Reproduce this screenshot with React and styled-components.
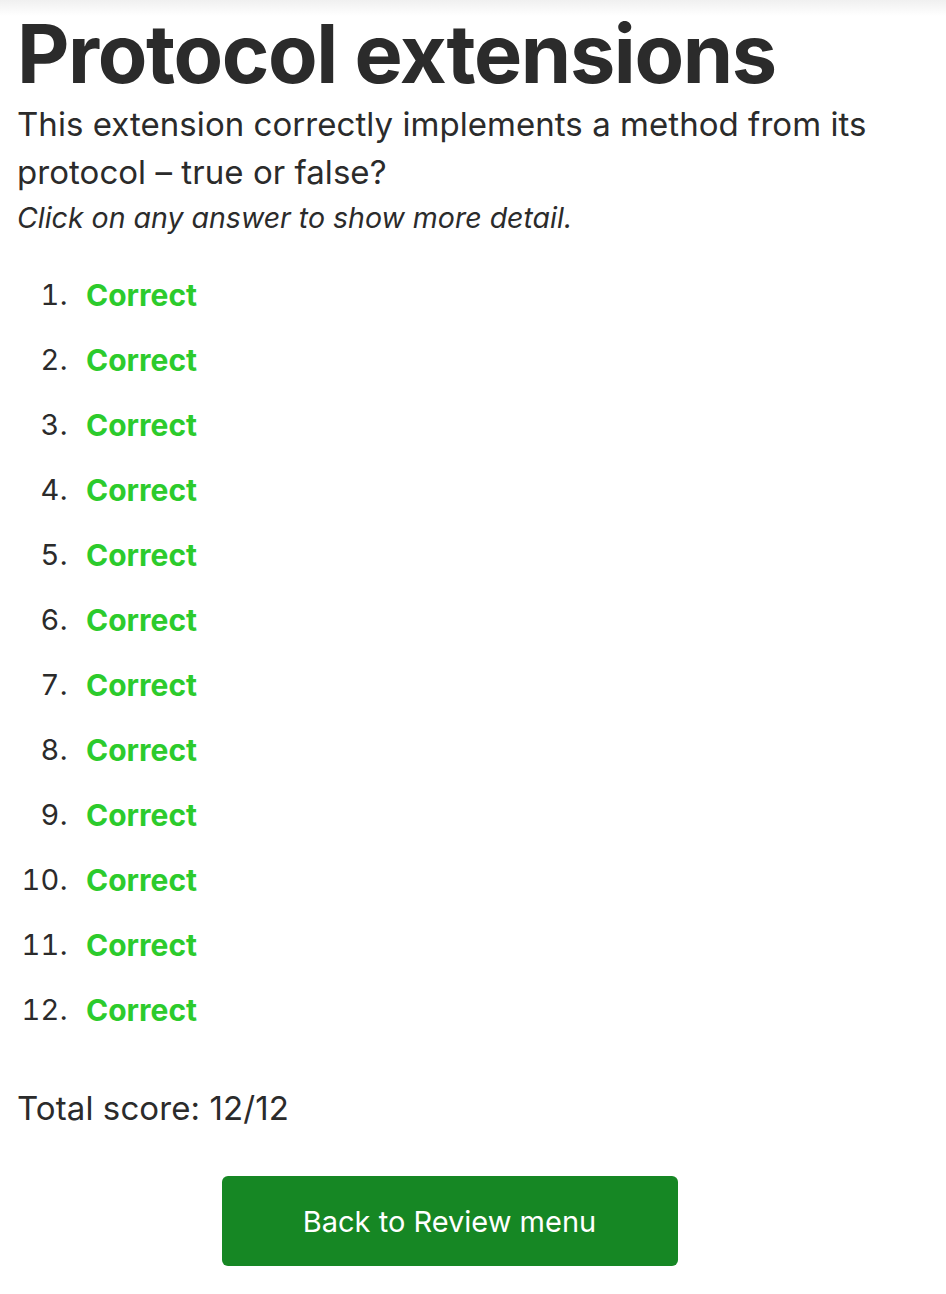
import React from 'react'
import styled, { createGlobalStyle } from 'styled-components';

const GlobalStyle = createGlobalStyle`
  html, body {
    margin: 0;
    padding: 0;
    background: #ffffff;
  }
  body {
    font-family: Inter, "Noto Sans", "Liberation Sans", sans-serif;
    color: #2b2b2b;
  }
`;

const Page = styled.div`
  min-height: 1294px;
  box-sizing: border-box;
  padding: 8px 18px 0 17px;
  background: linear-gradient(#f0f0f0 0px, #ffffff 16px);
`;

const Title = styled.h1`
  margin: 0;
  font-size: 81px;
  font-weight: 700;
  line-height: 92px;
  letter-spacing: -1.4px;
`;

const Question = styled.p`
  margin: 0;
  font-size: 33px;
  line-height: 48px;
  font-weight: 400;
  letter-spacing: 0.05px;
`;

const Hint = styled.p`
  margin: 0;
  font-size: 28.5px;
  line-height: 44px;
  font-style: italic;
`;

const AnswerList = styled.ol`
  list-style: none;
  margin: 22px 0 0 0;
  padding: 0;
  display: flex;
  flex-direction: column;
`;

const AnswerRow = styled.li`
  display: grid;
  grid-template-columns: 51px 1fr;
  column-gap: 18px;
  align-items: center;
  height: 65px;
  font-size: 29px;
`;

const Number = styled.span`
  text-align: right;
  color: #2b2b2b;
  letter-spacing: 0.4px;
  font-variant-numeric: tabular-nums;
`;

const Result = styled.span`
  font-weight: 700;
  font-size: 30px;
  color: ${props => props.correct ? '#2ccb2c' : '#d63a3a'};
`;

const Total = styled.p`
  margin: 46px 0 0 0;
  font-size: 33px;
  line-height: 40px;
  letter-spacing: 0.1px;
`;

const ButtonWrap = styled.div`
  display: flex;
  justify-content: center;
  margin-top: 48px;
  padding-right: 46px;
`;

const BackButton = styled.button`
  width: 456px;
  height: 90px;
  border: none;
  border-radius: 6px;
  background: #168724;
  color: #ffffff;
  font-family: inherit;
  font-size: 29px;
  font-weight: 400;
  cursor: pointer;
`;

const answers = Array.from({ length: 12 }, () => true);

function App() {
  return (
    <Page>
      <GlobalStyle />
      <Title>Protocol extensions</Title>
      <Question>This extension correctly implements a method from its protocol – true or false?</Question>
      <Hint>Click on any answer to show more detail.</Hint>
      <AnswerList>
        {answers.map((ok, i) => (
          <AnswerRow key={i}>
            <Number>{i + 1}.</Number>
            <Result correct={ok}>{ok ? 'Correct' : 'Wrong'}</Result>
          </AnswerRow>
        ))}
      </AnswerList>
      <Total>Total score: 12/12</Total>
      <ButtonWrap>
        <BackButton>Back to Review menu</BackButton>
      </ButtonWrap>
    </Page>
  );
}

export default App;
